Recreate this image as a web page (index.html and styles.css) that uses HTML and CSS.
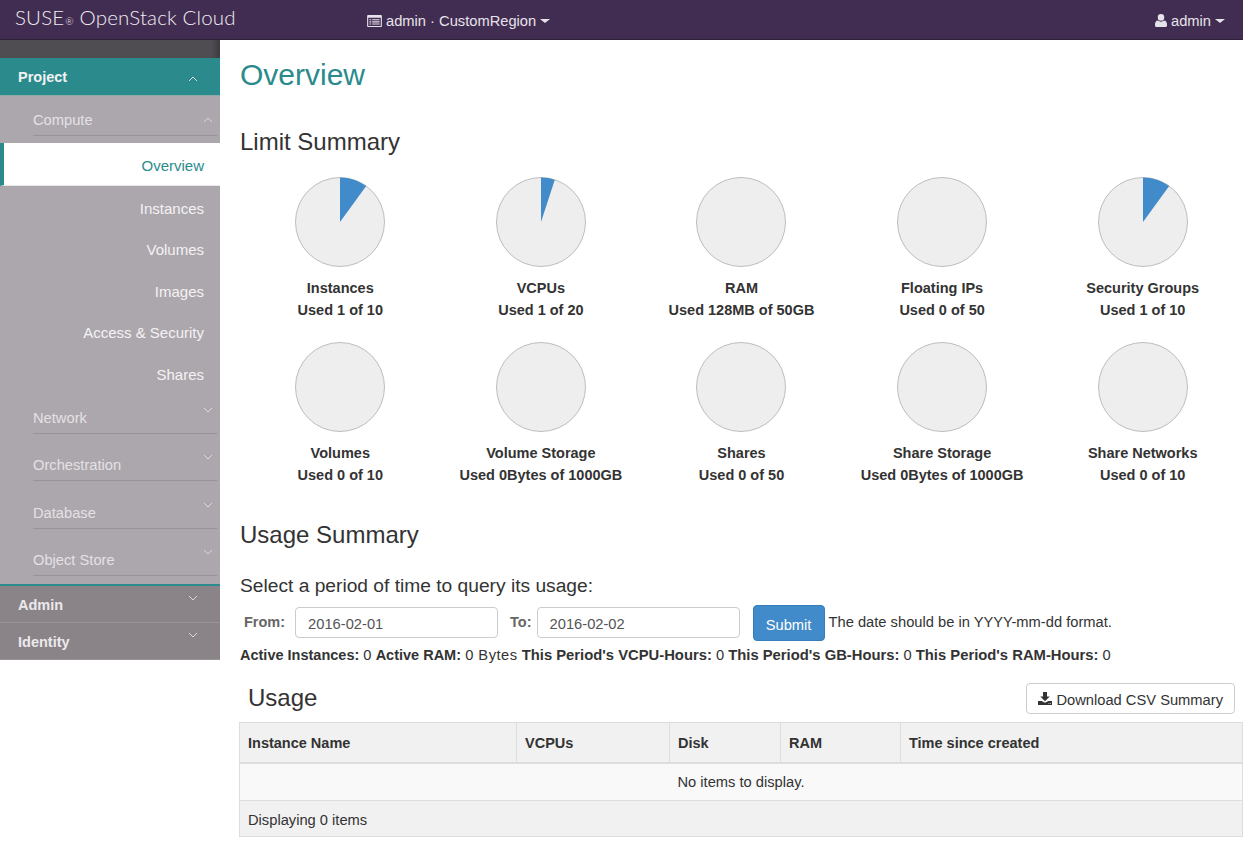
FILE: index.html
```html
<!DOCTYPE html>
<html lang="en">
<head>
    <meta charset="UTF-8">
    <title>Usage Overview</title>
    <link rel="stylesheet" href="styles.css">
</head>
<body>
    <nav class="topbar">
        <div class="brand">SUSE<span class="brand-mark">®</span> OpenStack Cloud</div>
        <div class="context">
            <svg class="icon-context" viewBox="0 0 16 13"><path fill="currentColor" fill-rule="evenodd" d="M1 0h14a1 1 0 0 1 1 1v11a1 1 0 0 1-1 1H1a1 1 0 0 1-1-1V1a1 1 0 0 1 1-1zm.2 3v8.8h13.6V3zM2.5 4.500h2v1.200h-2zm3 0h8v1.200h-8zm-3 2.300h2V8h-2zm3 0h8V8h-8zm-3 2.300h2v1.200h-2zm3 0h8v1.200h-8z"/></svg>
            <span>admin · CustomRegion</span><i class="caret"></i>
        </div>
        <div class="user">
            <svg class="icon-user" viewBox="0 0 12 13"><path fill="currentColor" d="M6 0a3.200 3.200 0 0 1 3.200 3.400A3.200 3.200 0 0 1 6 6.800a3.200 3.200 0 0 1-3.200-3.400A3.200 3.200 0 0 1 6 0zM3 6.600C3.800 7.300 4.800 7.700 6 7.700s2.200-.4 3-1.100c1.900.2 3 1.600 3 4V11.500c0 .9-.6 1.500-1.500 1.500h-9C.6 13 0 12.400 0 11.500v-.9c0-2.400 1.100-3.800 3-4z"/></svg>
            <span>admin</span><i class="caret"></i>
        </div>
    </nav>

    <div class="page">
        <aside class="sidebar">
            <div class="sidebar-top"></div>
            <div class="dash dash-active">Project<svg class="chev" viewBox="0 0 10 6"><path d="M1 5l4-4 4 4"/></svg></div>
            <div class="panels">
                <div class="panel-group panel-compute">Compute<svg class="chev" viewBox="0 0 10 6"><path d="M1 5l4-4 4 4"/></svg></div>
                <a class="link link-active">Overview</a>
                <a class="link">Instances</a>
                <a class="link">Volumes</a>
                <a class="link">Images</a>
                <a class="link">Access &amp; Security</a>
                <a class="link">Shares</a>
                <div class="panel-group">Network<svg class="chev" viewBox="0 0 10 6"><path d="M1 1l4 4 4-4"/></svg></div>
                <div class="panel-group">Orchestration<svg class="chev" viewBox="0 0 10 6"><path d="M1 1l4 4 4-4"/></svg></div>
                <div class="panel-group">Database<svg class="chev" viewBox="0 0 10 6"><path d="M1 1l4 4 4-4"/></svg></div>
                <div class="panel-group">Object Store<svg class="chev" viewBox="0 0 10 6"><path d="M1 1l4 4 4-4"/></svg></div>
            </div>
            <div class="dash dash-admin">Admin<svg class="chev" viewBox="0 0 10 6"><path d="M1 1l4 4 4-4"/></svg></div>
            <div class="dash">Identity<svg class="chev" viewBox="0 0 10 6"><path d="M1 1l4 4 4-4"/></svg></div>
        </aside>

        <main class="content">
            <h1>Overview</h1>
            <h2 class="limit-title">Limit Summary</h2>
            <div class="pies">
                <div class="pie-item">
                    <svg class="pie" viewBox="0 0 90 90"><circle cx="45" cy="45" r="44.500"/><path d="M45 45V0.500A44.500 44.500 0 0 1 71.200 9z"/></svg>
                    <strong>Instances</strong><strong>Used 1 of 10</strong>
                </div>
                <div class="pie-item">
                    <svg class="pie" viewBox="0 0 90 90"><circle cx="45" cy="45" r="44.500"/><path d="M45 45V0.500A44.500 44.500 0 0 1 58.800 2.700z"/></svg>
                    <strong>VCPUs</strong><strong>Used 1 of 20</strong>
                </div>
                <div class="pie-item">
                    <svg class="pie" viewBox="0 0 90 90"><circle cx="45" cy="45" r="44.500"/></svg>
                    <strong>RAM</strong><strong>Used 128MB of 50GB</strong>
                </div>
                <div class="pie-item">
                    <svg class="pie" viewBox="0 0 90 90"><circle cx="45" cy="45" r="44.500"/></svg>
                    <strong>Floating IPs</strong><strong>Used 0 of 50</strong>
                </div>
                <div class="pie-item">
                    <svg class="pie" viewBox="0 0 90 90"><circle cx="45" cy="45" r="44.500"/><path d="M45 45V0.500A44.500 44.500 0 0 1 71.200 9z"/></svg>
                    <strong>Security Groups</strong><strong>Used 1 of 10</strong>
                </div>
                <div class="pie-item">
                    <svg class="pie" viewBox="0 0 90 90"><circle cx="45" cy="45" r="44.500"/></svg>
                    <strong>Volumes</strong><strong>Used 0 of 10</strong>
                </div>
                <div class="pie-item">
                    <svg class="pie" viewBox="0 0 90 90"><circle cx="45" cy="45" r="44.500"/></svg>
                    <strong>Volume Storage</strong><strong>Used 0Bytes of 1000GB</strong>
                </div>
                <div class="pie-item">
                    <svg class="pie" viewBox="0 0 90 90"><circle cx="45" cy="45" r="44.500"/></svg>
                    <strong>Shares</strong><strong>Used 0 of 50</strong>
                </div>
                <div class="pie-item">
                    <svg class="pie" viewBox="0 0 90 90"><circle cx="45" cy="45" r="44.500"/></svg>
                    <strong>Share Storage</strong><strong>Used 0Bytes of 1000GB</strong>
                </div>
                <div class="pie-item">
                    <svg class="pie" viewBox="0 0 90 90"><circle cx="45" cy="45" r="44.500"/></svg>
                    <strong>Share Networks</strong><strong>Used 0 of 10</strong>
                </div>
            </div>

            <h2 class="usage-title">Usage Summary</h2>
            <h3 class="period">Select a period of time to query its usage:</h3>
            <form class="date-form">
                <label for="from">From:</label>
                <input id="from" class="date-input" type="text" value="2016-02-01">
                <label for="to" class="label-to">To:</label>
                <input id="to" class="date-input" type="text" value="2016-02-02">
                <button type="button" class="btn-submit">Submit</button>
                <span class="hint">The date should be in YYYY-mm-dd format.</span>
            </form>
            <p class="stats"><strong>Active Instances:</strong> 0 <strong>Active RAM:</strong> <span class="bytes">0 Bytes</span> <strong class="period-stat">This Period's VCPU-Hours:</strong> 0 <strong class="period-stat">This Period's GB-Hours:</strong> 0 <strong class="period-stat">This Period's RAM-Hours:</strong> 0</p>

            <div class="table-head">
                <h2>Usage</h2>
                <button type="button" class="btn-csv">
                    <svg class="icon-download" viewBox="0 0 14 13"><path fill="currentColor" d="M5 0h4v4.500h2.700L7 9.200 2.300 4.500H5zM0 9h3.600L7 10.800 10.400 9H14v4H0zm10.500 2.200v.8h.8v-.8zm1.700 0v.8h.8v-.8z"/></svg>
                    Download CSV Summary
                </button>
            </div>
            <table class="usage">
                <thead>
                    <tr>
                        <th class="col-name">Instance Name</th>
                        <th class="col-vcpu">VCPUs</th>
                        <th class="col-disk">Disk</th>
                        <th class="col-ram">RAM</th>
                        <th>Time since created</th>
                    </tr>
                </thead>
                <tbody>
                    <tr><td colspan="5" class="empty">No items to display.</td></tr>
                </tbody>
                <tfoot>
                    <tr><td colspan="5">Displaying 0 items</td></tr>
                </tfoot>
            </table>
        </main>
    </div>
</body>
</html>
```
FILE: styles.css
```css
* {
    box-sizing: border-box;
}

body {
    margin: 0;
    font-family: "Liberation Sans", Arial, sans-serif;
    font-size: 14.7px;
    line-height: 20px;
    color: #333;
    background-color: #fff;
}

strong {
    font-size: 14.5px;
}

.topbar {
    display: flex;
    align-items: center;
    height: 40px;
    padding-top: 2px;
    background-color: #422d52;
    border-bottom: 1px solid #2c2138;
    color: #e6e2ea;
}

.brand {
    width: 367px;
    margin-top: -4px;
    padding-left: 15px;
    font-family: "Lato", sans-serif;
    font-size: 20.500px;
    font-weight: 300;
    letter-spacing: 0.150px;
    color: #f1eef3;
}

.brand-mark {
    font-size: 10px;
    margin-left: 1px;
}

.context, .user {
    display: flex;
    align-items: center;
}

.user {
    margin-left: auto;
    padding-right: 18px;
}

.icon-context {
    width: 15px;
    height: 12px;
    margin-right: 4px;
}

.icon-user {
    width: 12px;
    height: 13px;
    margin-right: 4px;
}

.caret {
    width: 0;
    height: 0;
    margin-left: 4px;
    border-top: 4px solid currentColor;
    border-left: 5px solid transparent;
    border-right: 5px solid transparent;
}

.page {
    display: flex;
    align-items: flex-start;
}

.sidebar {
    flex: 0 0 220px;
    width: 220px;
    color: #f4f2f4;
}

.sidebar-top {
    height: 18px;
    background: linear-gradient(to right, #4f4c52 96%, #3d3a40);
}

.chev {
    position: absolute;
    width: 10px;
    height: 6px;
    fill: none;
    stroke: #ddd9dd;
    stroke-width: 1;
}

.dash {
    position: relative;
    height: 37px;
    padding: 9px 18px;
    font-size: 14.500px;
    font-weight: bold;
    color: #ece9ec;
    background-color: #8a8489;
    border-bottom: 1px solid #9a9499;
}

.dash .chev {
    right: 22px;
    top: 9px;
}

.dash-active {
    height: 38px;
    background-color: #2b8b8c;
    border-bottom-color: #8fa9a9;
    color: #f2f2f2;
}

.dash-active .chev {
    top: 18px;
}

.dash-admin {
    height: 39px;
    border-top: 2px solid #2b8b8c;
}

.panels {
    display: flex;
    flex-direction: column;
    background-color: #aca7ac;
}

.panel-group {
    position: relative;
    height: 40px;
    margin: 0 3px 7.500px 33px;
    padding-top: 14px;
    border-bottom: 1px solid #98939a;
    color: #e4e1e4;
}

.panel-compute {
    margin-bottom: 7px;
}

.panel-group .chev {
    right: 4px;
    top: 13px;
}

.panel-compute .chev {
    top: 21px;
}

.link {
    height: 41.500px;
    padding: 12.500px 16px 0 0;
    font-size: 15px;
    text-align: right;
}

.link-active {
    height: 43px;
    padding-top: 12.500px;
    background-color: #fff;
    border-left: 4px solid #2b8b8c;
    border-bottom: 1px solid #e8e8e8;
    color: #2b8b8c;
}

.content {
    flex: 1;
    min-width: 0;
    padding-left: 20px;
}

h1, h2, h3 {
    margin: 0;
    font-weight: normal;
}

h1 {
    padding-top: 16px;
    font-size: 30px;
    line-height: 38px;
    color: #2b8b8c;
}

h2 {
    font-size: 24px;
    line-height: 30px;
}

.limit-title {
    margin-top: 33px;
}

.pies {
    display: grid;
    grid-template-columns: repeat(5, 1fr);
    row-gap: 21px;
    margin-top: 20px;
}

.pie-item {
    display: flex;
    flex-direction: column;
    align-items: center;
    line-height: 22px;
}

.pie {
    width: 90px;
    height: 90px;
    margin-bottom: 10px;
}

.pie circle {
    fill: #eeeeee;
    stroke: #bdbdbd;
    stroke-width: 1;
}

.pie path {
    fill: #428bca;
}

.usage-title {
    margin-top: 34px;
}

.period {
    margin-top: 24px;
    font-size: 19.200px;
    line-height: 24px;
}

.date-form {
    display: flex;
    align-items: center;
    margin-top: 4px;
    padding-left: 4px;
}

.date-form label {
    font-size: 14.500px;
    font-weight: bold;
    color: #666;
    margin-right: 10px;
}

.date-form .label-to {
    margin-left: 12px;
    margin-right: 5px;
}

.date-input {
    width: 203px;
    height: 31px;
    padding: 7px 12px 5px;
    margin-top: 2px;
    border: 1px solid #ccc;
    border-radius: 4px;
    font-family: inherit;
    font-size: 14.700px;
    color: #555;
}

.btn-submit {
    width: 72px;
    height: 36px;
    margin: 3px 4px 0 13px;
    padding-top: 4px;
    border: 1px solid #357ebd;
    border-radius: 4px;
    background-color: #428bca;
    color: #fff;
    font-family: inherit;
    font-size: 14.700px;
}

.stats {
    margin: 4px 0 0;
}

.bytes {
    letter-spacing: 0.500px;
}

.stats .period-stat {
    font-size: 14.800px;
}

.table-head {
    display: flex;
    justify-content: space-between;
    align-items: center;
    height: 40px;
    margin-top: 13px;
    padding: 0 8px;
}

.btn-csv {
    display: flex;
    align-items: center;
    height: 31px;
    margin-top: 1px;
    padding: 3px 11px 0;
    border: 1px solid #ccc;
    border-radius: 4px;
    background-color: #fff;
    color: #333;
    font-family: inherit;
    font-size: 14.700px;
}

.icon-download {
    width: 14px;
    height: 13px;
    margin-right: 4px;
    margin-top: -3px;
}

.usage {
    width: calc(100% + 1px);
    margin: 4px 0 0 -1px;
    border-collapse: collapse;
    border: 1px solid #ddd;
}

.usage th {
    height: 40px;
    padding: 2px 8px 0;
    text-align: left;
    font-size: 14.500px;
    background-color: #f1f1f1;
    border-left: 1px solid #ddd;
    border-bottom: 2px solid #ddd;
}

.col-name { width: 277px; }
.col-vcpu { width: 153px; }
.col-disk { width: 111px; }
.col-ram { width: 120px; }

.usage td {
    height: 38px;
    padding: 0 8px;
    border-top: 1px solid #ddd;
}

.empty {
    text-align: center;
    background-color: #f9f9f9;
}

.usage tfoot td {
    height: 36px;
    padding-top: 2px;
    background-color: #f1f1f1;
}
```
